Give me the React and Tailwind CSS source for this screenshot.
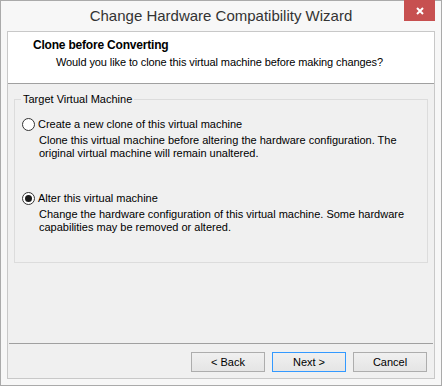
import React from "react";

const font = { fontFamily: '"Liberation Sans", Arial, sans-serif' };

const Radio = ({ checked }) => (
  <span className="flex h-[13px] w-[13px] shrink-0 items-center justify-center rounded-full border border-[#333] bg-white">
    {checked && <span className="h-[7px] w-[7px] rounded-full bg-[#1a1a1a]" />}
  </span>
);

const Option = ({ checked, label, lines, className = "" }) => (
  <div className={"flex flex-col " + className}>
    <div className="flex items-center gap-[3px] pl-[7px]">
      <Radio checked={checked} />
      <span className="leading-[16px]">{label}</span>
    </div>
    <div className="pl-[24px] pt-[2px] leading-[13px]">
      {lines.map((l) => (
        <div key={l}>{l}</div>
      ))}
    </div>
  </div>
);

const WizButton = ({ children, primary }) => (
  <button
    className={
      "h-[20px] w-[74px] border bg-gradient-to-b from-[#f0f0f0] to-[#e5e5e5] leading-[18px] text-black " +
      (primary ? "border-[#3399ff]" : "border-[#adadad]")
    }
  >
    {children}
  </button>
);

export default function App() {
  return (
    <div
      className="flex h-[386px] w-[442px] flex-col border border-[#aaaaaa] bg-[#f7f7f7] text-[11px] whitespace-nowrap text-black"
      style={font}
    >
      {/* Title bar */}
      <div className="relative flex h-[30px] shrink-0 items-center justify-center">
        <span className="text-[15px] text-[#333]">Change Hardware Compatibility Wizard</span>
        <div className="absolute top-[-1px] right-[6px] flex h-[21px] w-[31px] items-center justify-center bg-[#c75050]">
          <svg width="8" height="8" viewBox="0 0 8 8">
            <path d="M1 1 L7 7 M7 1 L1 7" stroke="white" strokeWidth="2" />
          </svg>
        </div>
      </div>

      {/* Client area */}
      <div className="mx-[6px] mb-[6px] flex flex-1 flex-col border border-[#c8c8c8] bg-[#f0f0f0]">
        <div className="h-[52px] shrink-0 border-b border-[#a0a0a0] bg-white pl-[25px] pt-[6px]">
          <div className="text-[12px] font-bold leading-[15px] tracking-[-0.2px]">Clone before Converting</div>
          <div className="pl-[23px] pt-[2px] leading-[15px] tracking-[-0.1px]">
            Would you like to clone this virtual machine before making changes?
          </div>
        </div>

        <div className="flex flex-1 flex-col px-[6px]">
          <div className="relative mt-[15px] h-[164px] border border-[#dcdcdc] pt-[16px]">
            <span className="absolute top-[-9px] left-[6px] bg-[#f0f0f0] px-[2px] leading-[16px]">
              Target Virtual Machine
            </span>
            <Option
              label="Create a new clone of this virtual machine"
              lines={[
                "Clone this virtual machine before altering the hardware configuration. The",
                "original virtual machine will remain unaltered.",
              ]}
            />
            <Option
              checked
              className="mt-[30px]"
              label="Alter this virtual machine"
              lines={[
                "Change the hardware configuration of this virtual machine. Some hardware",
                "capabilities may be removed or altered.",
              ]}
            />
          </div>
        </div>

        <div className="mx-[1px] border-t border-[#a0a0a0]" />
        <div className="flex h-[34px] shrink-0 items-start justify-end gap-[7px] pt-[8px] pr-[7px]">
          <WizButton>&lt; Back</WizButton>
          <WizButton primary>Next &gt;</WizButton>
          <WizButton>Cancel</WizButton>
        </div>
      </div>
    </div>
  );
}
